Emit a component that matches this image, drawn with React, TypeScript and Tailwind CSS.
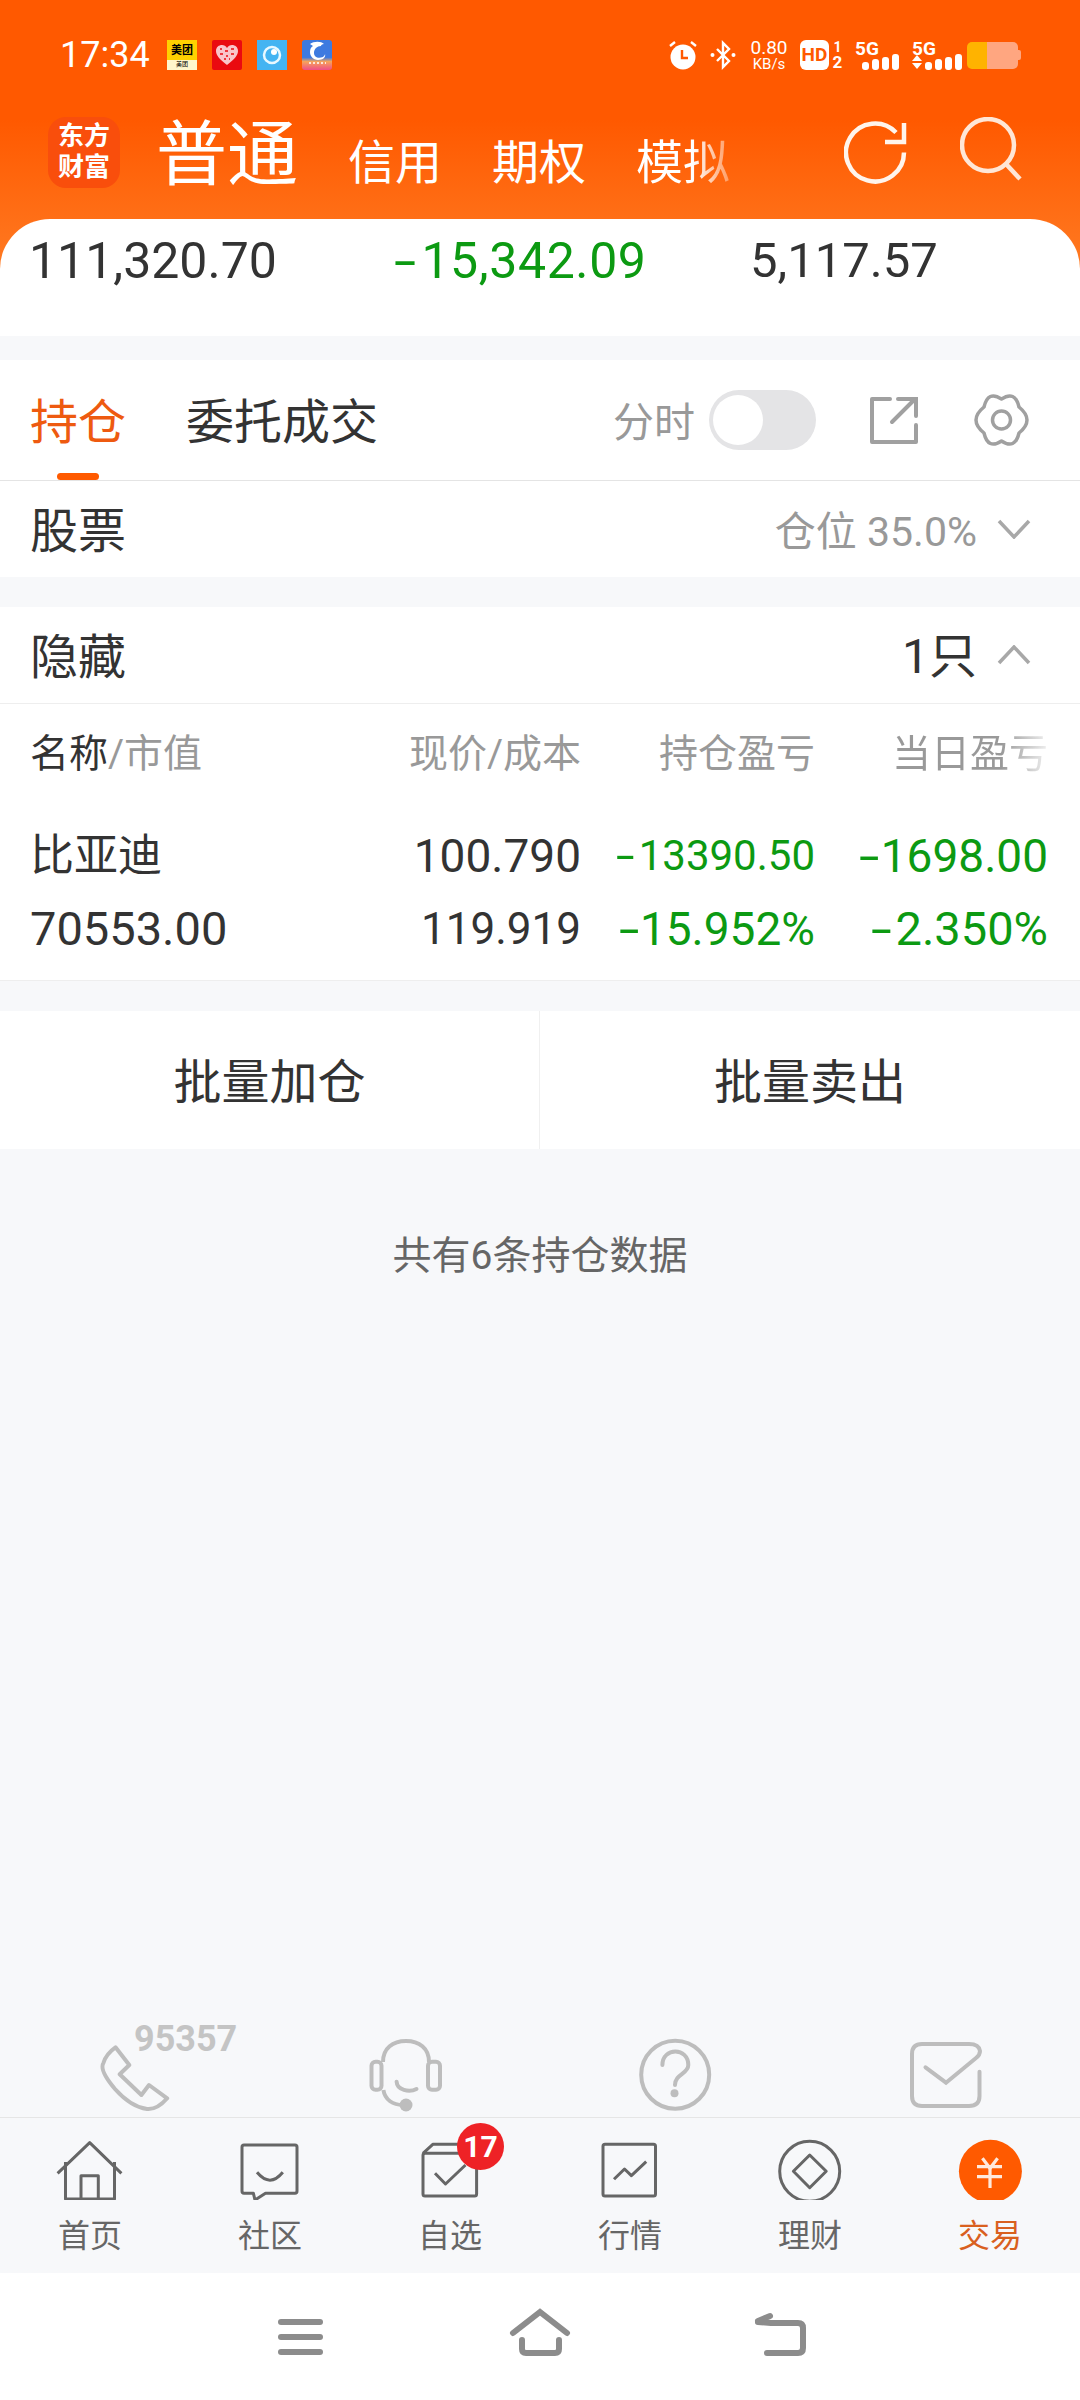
import React from "react";

const Minus = ({ className }: { className: string }) => (
  <span className={`inline-block origin-left scale-x-[1.6] ${className}`}>-</span>
);

const Bars = ({ arrows }: { arrows?: boolean }) => (
  <div className="flex items-end gap-[3px] h-[20px]">
    {arrows && (
      <div className="flex flex-col items-center gap-[2px] mb-[1px]">
        <span className="w-0 h-0 border-x-[5px] border-x-transparent border-b-[6px] border-b-white" />
        <span className="w-0 h-0 border-x-[5px] border-x-transparent border-t-[6px] border-t-white" />
      </div>
    )}
    <span className="w-[7px] h-[8px] rounded-[3px] bg-white" />
    <span className="w-[7px] h-[11px] rounded-[3px] bg-white" />
    <span className="w-[7px] h-[13px] rounded-[3px] bg-white" />
    <span className="w-[7px] h-[16px] rounded-[3px] bg-white" />
  </div>
);

const Signal = ({ arrows }: { arrows?: boolean }) => (
  <div className={`flex flex-col ${arrows ? "w-[46px]" : "w-[44px]"}`}>
    <span className="text-[19px] leading-[18px] font-bold text-white">5G</span>
    <div className={`flex ${arrows ? "justify-start" : "justify-end"} -mt-[2px] h-[14px] items-end`}>
      <Bars arrows={arrows} />
    </div>
  </div>
);

const StatusBar = () => (
  <div className="h-[108px] flex items-center pl-[60px] pr-[59px] pt-[2px]">
    <span className="text-[36px] leading-none text-white w-[107px]">17:34</span>
    <div className="flex gap-[15px]">
      <div className="w-[30px] h-[30px] bg-[#ffd100] flex flex-col items-center justify-start overflow-hidden">
        <span className="text-[11px] leading-[15px] mt-[3px] font-bold text-black">美团</span>
        <span className="w-full flex-1 bg-[#fff6cc] mt-[2px] text-[6px] leading-[8px] text-center text-black">美团</span>
      </div>
      <div className="w-[30px] h-[30px] rounded-[2px] bg-[#ea0a10] flex items-center justify-center">
        <svg width="24" height="22" viewBox="0 0 24 22">
          <path d="M12 21 C4 15 1 11 1 7 C1 3 4 1 7 1 C9 1 11 2 12 4 C13 2 15 1 17 1 C20 1 23 3 23 7 C23 11 20 15 12 21Z" fill="#f9c5cb" />
          <path d="M5 5h2M10 7h3M16 5h3M5 10h3M11 12h2M16 10h3M9 15h2M14 15h1" stroke="#ea0a10" strokeWidth="1.5" />
        </svg>
      </div>
      <div className="w-[30px] h-[30px] bg-[#44b4f2] flex items-center justify-center">
        <svg width="22" height="22" viewBox="0 0 22 22">
          <circle cx="11" cy="11" r="8" fill="none" stroke="#e8f8ff" strokeWidth="2.5" />
          <circle cx="11" cy="11" r="5" fill="#44b4f2" />
          <circle cx="13" cy="8" r="3" fill="#ffffff" />
        </svg>
      </div>
      <div className="w-[30px] h-[30px] rounded-[3px] overflow-hidden bg-[linear-gradient(180deg,#3d7ae0_0,#3d7ae0_58%,#f7a45a_72%,#ee4f86_100%)] flex items-start justify-center">
        <svg width="26" height="26" viewBox="0 0 26 26">
          <path d="M6 4 C10 1 17 1 20 4 C18 4 17 5 17 6 C13 6 10 9 10 13 C10 17 14 19 19 17 C20 16 21 15 21 14 C22 17 19 20 14 20 C9 20 6 16 6 12 C6 9 7 7 9 6 Z" fill="#ffffff" />
          <path d="M5 23 H22" stroke="#ffffff" strokeWidth="1.5" strokeDasharray="2 2" />
        </svg>
      </div>
    </div>
    <div className="ml-auto flex items-center">
      <svg width="30" height="30" viewBox="0 0 30 30" className="mr-[12px]">
        <circle cx="15" cy="17" r="12.5" fill="#fff" />
        <path d="M14 10 V18 H20" stroke="#ff5900" strokeWidth="2.4" fill="none" />
        <path d="M2 6 L7 2 M28 6 L23 2" stroke="#fff" strokeWidth="2.4" />
      </svg>
      <svg width="26" height="30" viewBox="0 0 26 30" className="mr-[14px]">
        <path d="M7 9 L19 21 L13 27 V3 L19 9 L7 21" stroke="#fff" strokeWidth="2.4" fill="none" />
        <circle cx="2.5" cy="15" r="2" fill="#fff" />
        <circle cx="23.5" cy="15" r="2" fill="#fff" />
      </svg>
      <div className="flex flex-col items-center w-[38px] mr-[12px] text-white">
        <span className="text-[19px] leading-[18px]">0.80</span>
        <span className="text-[15px] leading-[14px]">KB/s</span>
      </div>
      <span className="w-[29px] h-[30px] rounded-[6px] bg-white text-[#ff5900] text-[19px] leading-[30px] font-bold text-center mr-[3px]">HD</span>
      <div className="flex flex-col items-center w-[11px] mr-[12px] text-white font-bold">
        <span className="text-[14px] leading-[14px]">1</span>
        <span className="text-[17px] leading-[16px]">2</span>
      </div>
      <Signal />
      <div className="w-[13px]" />
      <Signal arrows />
      <div className="w-[9px]" />
      <div className="relative flex w-[51px] h-[27px] rounded-[5px] overflow-hidden">
        <span className="w-[20px] bg-[#ffb300]" />
        <span className="flex-1 bg-[#ffa680]" />
      </div>
      <span className="w-[3px] h-[10px] rounded-r-[2px] bg-[#ffa680]" />
    </div>
  </div>
);

const NavBar = () => (
  <div className="h-[88px] flex items-center pl-[48px]">
    <div className="w-[72px] h-[71px] rounded-[18px] bg-[#f94e0c] flex flex-col items-center justify-center text-white font-bold text-[26px] leading-[31px]">
      <span>东方</span>
      <span>财富</span>
    </div>
    <span className="ml-[36px] mt-[5px] text-[71px] leading-[88px] text-white">普通</span>
    <div className="ml-[50px] mt-[22px] flex gap-[50px] text-[47px] leading-[60px] text-white">
      <span>信用</span>
      <span>期权</span>
      <span className="bg-[linear-gradient(90deg,#fff_60%,rgba(255,255,255,0.35)_100%)] bg-clip-text text-transparent">模拟</span>
    </div>
    <div className="ml-auto flex items-center pr-[58px] gap-[52px]">
      <svg width="64" height="64" viewBox="0 0 64 64">
        <path d="M60 32.5 A29 29 0 1 1 52 12.5" fill="none" stroke="#fff4ec" strokeWidth="4.5" />
        <path d="M60 3 V22 H41" fill="none" stroke="#fff4ec" strokeWidth="4.5" />
      </svg>
      <svg width="62" height="64" viewBox="0 0 62 64" className="-mt-[6px]">
        <circle cx="28" cy="28" r="26" fill="none" stroke="#ffe6d6" strokeWidth="4.5" />
        <path d="M46 47 L60 62" stroke="#ffe6d6" strokeWidth="4.5" />
      </svg>
    </div>
  </div>
);

const Summary = () => (
  <div className="h-[117px] rounded-t-[50px] bg-white grid grid-cols-[365px_356px_1fr] pl-[29px] pt-[16px] text-[50px] leading-[52px] text-[#333333]">
    <span>111,320.70</span>
    <span className="text-[#0c9a12] tracking-[0.6px]"><Minus className="mr-[13px]" />15,342.09</span>
    <span className="text-[49px]">5,117.57</span>
  </div>
);

const Tabs = () => (
  <div className="mt-[24px] h-[121px] bg-white border-b border-[#e4e4e4] flex items-center pl-[30px]">
    <div className="relative h-full w-[96px] flex items-center">
      <span className="mt-[6px] text-[48px] leading-none text-[#ee5a10]">持仓</span>
      <span className="absolute left-[27px] bottom-0 w-[42px] h-[7px] rounded-[4px] bg-[#ff5a00]" />
    </div>
    <span className="mt-[6px] ml-[60px] text-[48px] leading-none text-[#333333]">委托成交</span>
    <span className="mt-[6px] ml-auto text-[41px] leading-none text-[#999999]">分时</span>
    <div className="ml-[14px] w-[107px] h-[60px] rounded-full bg-[#e4e4e6] pl-[4px] flex items-center">
      <span className="w-[50px] h-[50px] rounded-full bg-white" />
    </div>
    <svg width="48" height="48" viewBox="0 0 48 48" className="ml-[54px]">
      <path d="M20 3 H2 V46 H46 V29" fill="none" stroke="#a0a0a0" strokeWidth="4" strokeLinejoin="round" strokeLinecap="round" />
      <path d="M22 26 L45 3 M28 3 H46 V20" fill="none" stroke="#a0a0a0" strokeWidth="4" strokeLinecap="round" />
    </svg>
    <svg width="56" height="56" viewBox="0 0 56 56" className="ml-[55px] mr-[51px]">
      <path d="M28.5 7 Q42 -2 46 15 Q62 28 46 41 Q42 58 28.5 49 Q15 58 11 41 Q-5 28 11 15 Q15 -2 28.5 7 Z" fill="none" stroke="#a0a0a0" strokeWidth="3.5" strokeLinejoin="round" />
      <circle cx="28.5" cy="28" r="9" fill="none" stroke="#a0a0a0" strokeWidth="3.5" />
    </svg>
  </div>
);

const Chevron = ({ up }: { up?: boolean }) => (
  <svg width="34" height="20" viewBox="0 0 34 20" className="ml-[20px]">
    <path d={up ? "M2 18 L17 2 L32 18" : "M2 2 L17 18 L32 2"} fill="none" stroke="#a8a8a8" strokeWidth="3.5" />
  </svg>
);

const StockHeader = () => (
  <div className="h-[96px] bg-white flex items-center pl-[30px] pr-[49px]">
    <span className="mt-[6px] text-[48px] leading-none text-[#333333]">股票</span>
    <span className="mt-[6px] ml-auto text-[41px] leading-none text-[#999999]">仓位 35.0%</span>
    <Chevron />
  </div>
);

const HiddenHeader = () => (
  <div className="mt-[30px] h-[97px] bg-white border-b border-[#eeeeee] flex items-center pl-[30px] pr-[49px]">
    <span className="mt-[6px] text-[48px] leading-none text-[#333333]">隐藏</span>
    <span className="mt-[4px] ml-auto text-[48px] leading-none text-[#333333]">1只</span>
    <Chevron up />
  </div>
);

const Table = () => (
  <div className="bg-white border-b border-[#eeeeee] h-[277px] pl-[30px] pr-[32px]">
    <div className="grid grid-cols-[551px_234px_233px] h-[100px] items-center text-[39px] leading-none text-[#999999]">
      <div className="grid grid-cols-[1fr_auto]">
        <span><span className="text-[#333333]">名称</span>/市值</span>
        <span>现价/成本</span>
      </div>
      <span className="text-right">持仓盈亏</span>
      <span className="text-right bg-[linear-gradient(90deg,#999_70%,rgba(153,153,153,0.15)_100%)] bg-clip-text text-transparent justify-self-end">当日盈亏</span>
    </div>
    <div className="grid grid-cols-[551px_234px_233px] grid-rows-[73px_73px] pt-[15px] items-center leading-none text-[#333333]">
      <div className="flex justify-between items-center">
        <span className="text-[44px]">比亚迪</span>
        <span className="text-[46px]">100.790</span>
      </div>
      <span className="text-right text-[#0c9a12] text-[42px]"><Minus className="mr-[11px]" />13390.50</span>
      <span className="text-right text-[#0c9a12] text-[46px]"><Minus className="mr-[9px]" />1698.00</span>
      <div className="flex justify-between items-center">
        <span className="text-[47px]">70553.00</span>
        <span className="text-[44px]">119.919</span>
      </div>
      <span className="text-right text-[#0c9a12] text-[46px]"><Minus className="mr-[8px]" />15.952%</span>
      <span className="text-right text-[#0c9a12] text-[47px]"><Minus className="mr-[12px]" />2.350%</span>
    </div>
  </div>
);

const Actions = () => (
  <div className="mt-[30px] h-[138px] bg-white grid grid-cols-2 text-[48px] leading-none text-[#333333]">
    <div className="flex items-center justify-center border-r border-[#f0f0f0] pt-[6px]">批量加仓</div>
    <div className="flex items-center justify-center pt-[6px]">批量卖出</div>
  </div>
);

const Help = () => (
  <div className="grid grid-cols-4 h-[81px] justify-items-center items-start">
    <div className="relative w-[76px] h-[76px]">
      <svg width="76" height="76" viewBox="0 0 76 76">
        <path d="M18.5 11.3 L32.3 29 L22.7 38.3 L44.4 59 L52 49 L70.2 62.3 Q60 74 50 73 Q34 71 18 53 Q2 34 6.4 27 Q9 18 18.5 11.3 Z" fill="none" stroke="#bdbdbd" strokeWidth="4" strokeLinejoin="round" />
      </svg>
      <span className="absolute left-[37px] -top-[13px] text-[36px] leading-[32px] font-bold text-[#c4c4c4]">95357</span>
    </div>
    <svg width="76" height="76" viewBox="0 0 76 76">
      <rect x="4.5" y="25.7" width="10" height="28" rx="4" fill="none" stroke="#bdbdbd" strokeWidth="4" />
      <rect x="61" y="25.7" width="12" height="28" rx="4" fill="none" stroke="#bdbdbd" strokeWidth="4" />
      <path d="M16 26 C16 12 26 5 39 5 C52 5 62 12 62 26" fill="none" stroke="#bdbdbd" strokeWidth="4" />
      <path d="M16.4 54 C18 64 26 69 36 69" fill="none" stroke="#bdbdbd" strokeWidth="4" />
      <circle cx="39" cy="69" r="6.5" fill="#bdbdbd" />
      <path d="M29.6 45.7 C30 54 42 57 49.5 53" fill="none" stroke="#bdbdbd" strokeWidth="4" strokeLinecap="round" />
    </svg>
    <svg width="76" height="76" viewBox="0 0 76 76">
      <circle cx="38.2" cy="38.7" r="34" fill="none" stroke="#bdbdbd" strokeWidth="4" />
      <path d="M25.4 29 C25.4 11 51.3 11 51.3 29 C51.3 38 38 38 38 49" fill="none" stroke="#bdbdbd" strokeWidth="4" strokeLinecap="round" />
      <circle cx="37.5" cy="57.3" r="4" fill="#bdbdbd" />
    </svg>
    <svg width="76" height="76" viewBox="0 0 76 76">
      <path d="M72.5 35.7 V60 Q72.5 70 62 70 H15 Q5 70 5 60 V18 Q5 8 15 8 H62 Q72 8 73 15 Q73 19 69 22 L39 46.7 L18.5 31.3" fill="none" stroke="#bdbdbd" strokeWidth="4" strokeLinecap="round" />
    </svg>
  </div>
);

const TabIcon = ({ children }: { children: React.ReactNode }) => (
  <svg width="70" height="70" viewBox="0 0 70 70" fill="none" stroke="#666666" strokeWidth="3" strokeLinejoin="round">
    {children}
  </svg>
);

const items: { label: string; active?: boolean; icon: React.ReactNode }[] = [
  {
    label: "首页",
    icon: (
      <TabIcon>
        <path d="M2.6 43.3 L34.7 12.7 L66.4 43.3" />
        <path d="M10.5 32 V69 H59.5 V32" />
        <path d="M26 69 V45.7 H43.3 V69" />
      </TabIcon>
    ),
  },
  {
    label: "社区",
    icon: (
      <TabIcon>
        <path d="M9 15 H60 Q62 15 62 17 V61 Q62 63.3 60 63.3 H30.5 L20 70 L18.4 63.3 H9 Q7 63.3 7 61 V17 Q7 15 9 15 Z" />
        <path d="M22 42.3 Q35 58 47.8 42.3" />
      </TabIcon>
    ),
  },
  {
    label: "自选",
    icon: (
      <TabIcon>
        <rect x="8" y="23.3" width="53.6" height="42.7" rx="2" />
        <path d="M8 23.3 L17.8 14.3 H47" />
        <path d="M20 43.3 L30.5 54 L50.5 35" />
      </TabIcon>
    ),
  },
  {
    label: "行情",
    icon: (
      <TabIcon>
        <rect x="8" y="14.3" width="52.5" height="51.7" rx="2" />
        <path d="M19 49.3 L29.5 39 L36.4 45.7 L51.2 31.7" />
      </TabIcon>
    ),
  },
  {
    label: "理财",
    icon: (
      <TabIcon>
        <circle cx="34.7" cy="41.3" r="30" />
        <path d="M34.7 25 L51.2 41.3 L34.7 57.7 L18.4 41.3 Z" />
      </TabIcon>
    ),
  },
  {
    label: "交易",
    active: true,
    icon: (
      <svg width="70" height="70" viewBox="0 0 70 70" fill="none" stroke="#ffe9dc" strokeWidth="3.2">
        <circle cx="35.4" cy="41.3" r="31.5" fill="#ff5a00" stroke="none" />
        <path d="M27.4 28.3 L35 38.3 L42.6 28.3" />
        <path d="M22 36.7 H47 M22 46.7 H47 M35 38 V58" />
      </svg>
    ),
  },
];

const TabBar = () => (
  <div className="h-[156px] border-t border-[#e6e6e6] grid grid-cols-6">
    {items.map((it) => (
      <div key={it.label} className="relative flex flex-col items-center pt-[12px]">
        {it.icon}
        <span className={`mt-[18px] text-[32px] leading-[36px] ${it.active ? "text-[#d9601f]" : "text-[#666666]"}`}>{it.label}</span>
        {it.label === "自选" && (
          <span className="absolute left-[97px] top-[5px] w-[47px] h-[47px] rounded-full bg-[#ee2226] text-white text-[30px] leading-[47px] font-bold text-center">17</span>
        )}
      </div>
    ))}
  </div>
);

const SystemNav = () => (
  <div className="h-[127px] bg-white flex items-center justify-center gap-[170px]">
    <div className="w-[70px] flex flex-col items-center gap-[9px]">
      <span className="w-[45px] h-[6px] rounded-[3px] bg-[#8c8c8c]" />
      <span className="w-[45px] h-[6px] rounded-[3px] bg-[#8c8c8c]" />
      <span className="w-[45px] h-[6px] rounded-[3px] bg-[#8c8c8c]" />
    </div>
    <svg width="70" height="60" viewBox="0 0 70 60" fill="none" stroke="#8c8c8c" strokeWidth="6" strokeLinecap="round">
      <path d="M8 26 L35 5 L62 26" />
      <path d="M17 33 V42 Q17 46 21 46 H50 Q54 46 54 42 V33" />
    </svg>
    <svg width="70" height="60" viewBox="0 0 70 60" fill="none" stroke="#8c8c8c" strokeWidth="6" strokeLinecap="round">
      <path d="M13 14 L25 9" />
      <path d="M13 15 L26 16 H53 Q58 16 58 21 V41 Q58 46 53 46 H22" />
    </svg>
  </div>
);

export default function App() {
  return (
    <div className="w-[1080px] h-[2400px] flex flex-col bg-[#f7f8fa] font-[Roboto,'Noto_Sans_CJK_SC',sans-serif]">
      <div className="h-[336px] bg-[linear-gradient(180deg,#ff5900_0,#ff5900_120px,#ff7a22_270px,#f7f8fa_270px)]">
        <StatusBar />
        <NavBar />
        <div className="h-[23px]" />
        <Summary />
      </div>
      <Tabs />
      <StockHeader />
      <HiddenHeader />
      <Table />
      <Actions />
      <div className="flex-1 pt-[79px] text-center text-[39px] leading-[56px] text-[#666666]">共有6条持仓数据</div>
      <Help />
      <TabBar />
      <SystemNav />
    </div>
  );
}
